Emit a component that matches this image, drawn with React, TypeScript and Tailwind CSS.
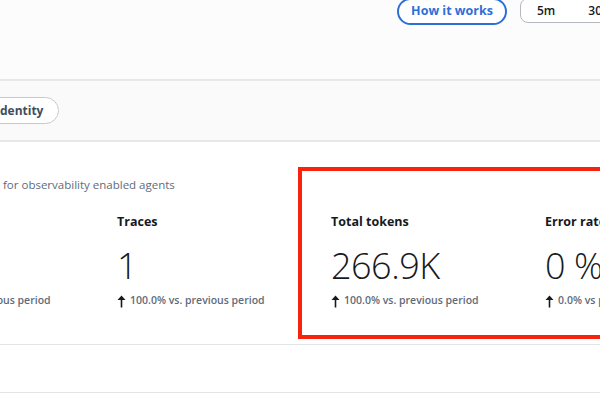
import React from 'react';

const ArrowUp: React.FC = () => (
  <svg width="9" height="13" viewBox="0 0 9 13" className="shrink-0">
    <path d="M4.5 0.5 L8.5 5 L5.3 5 L5.3 12.5 L3.7 12.5 L3.7 5 L0.5 5 Z" fill="#16191f" />
  </svg>
);

type Metric = { label: string; value: string; change: string };

const metrics: Metric[] = [
  { label: '', value: '', change: '100.0% vs. previous period' },
  { label: 'Traces', value: '1', change: '100.0% vs. previous period' },
  { label: 'Total tokens', value: '266.9K', change: '100.0% vs. previous period' },
  { label: 'Error rate', value: '0 %', change: '0.0% vs previous period' },
];

const MetricCol: React.FC<{ m: Metric }> = ({ m }) => (
  <div className="w-[214px] shrink-0 flex flex-col">
    <div className="h-[20px] flex items-center text-[12.5px] font-bold text-[#16191f]">{m.label}</div>
    <div className="mt-[18px] h-[32px] flex items-center text-[36px] font-light leading-none text-[#16191f] tracking-[-0.5px]">
      {m.value}
    </div>
    <div className="mt-[11px] flex items-center gap-[4px] text-[10.5px] font-semibold text-[#5f6b7a] whitespace-nowrap">
      <ArrowUp />
      <span>{m.change}</span>
    </div>
  </div>
);

export default function App() {
  return (
    <div className="relative w-[600px] h-[400px] overflow-hidden bg-white font-['Open_Sans',sans-serif]">
      {/* header */}
      <div className="h-[79px] bg-[#fcfcfc] flex items-start pl-[397px] gap-[13px]">
        <button className="-mt-[2px] h-[27px] w-[110px] shrink-0 whitespace-nowrap rounded-full border-2 border-[#2d6fd8] text-[12.5px] font-bold text-[#2d6fd8] bg-white">
          How it works
        </button>
        <div className="-mt-[2px] h-[25px] w-[120px] shrink-0 rounded-l-lg border border-[#b4b9bf] bg-white flex items-center text-[12px] font-semibold text-[#16191f] whitespace-nowrap">
          <span className="ml-[16px]">5m</span>
          <span className="ml-[33px]">30m</span>
        </div>
      </div>
      <div className="h-[2px] bg-[#e6e8ea]" />

      {/* filter band */}
      <div className="h-[59px] bg-[#fafafa] flex items-center">
        <div className="-ml-[22px] h-[27px] rounded-full border border-[#c6c9cd] bg-white flex items-center pl-[17px] pr-[15px] text-[12px] font-bold text-[#414d5c]">
          Identity
        </div>
      </div>
      <div className="h-[2px] bg-[#e6e8ea]" />

      {/* metrics card */}
      <div className="h-[202px] bg-white pt-[34px]">
        <div className="pl-[3px] text-[11.5px] text-[#5f6b7a]">for observability enabled agents</div>
        <div className="mt-[19px] -ml-[97px] flex">
          {metrics.map((m, i) => (
            <MetricCol key={i} m={m} />
          ))}
        </div>
      </div>
      <div className="h-px bg-[#e3e5e8]" />
      <div className="h-[47px] bg-white" />
      <div className="h-px bg-[#e3e5e8]" />

      {/* highlight annotation */}
      <div className="absolute left-[298px] top-[167px] w-[320px] h-[172px] border-[4px] border-[#f7230d]" />
    </div>
  );
}
